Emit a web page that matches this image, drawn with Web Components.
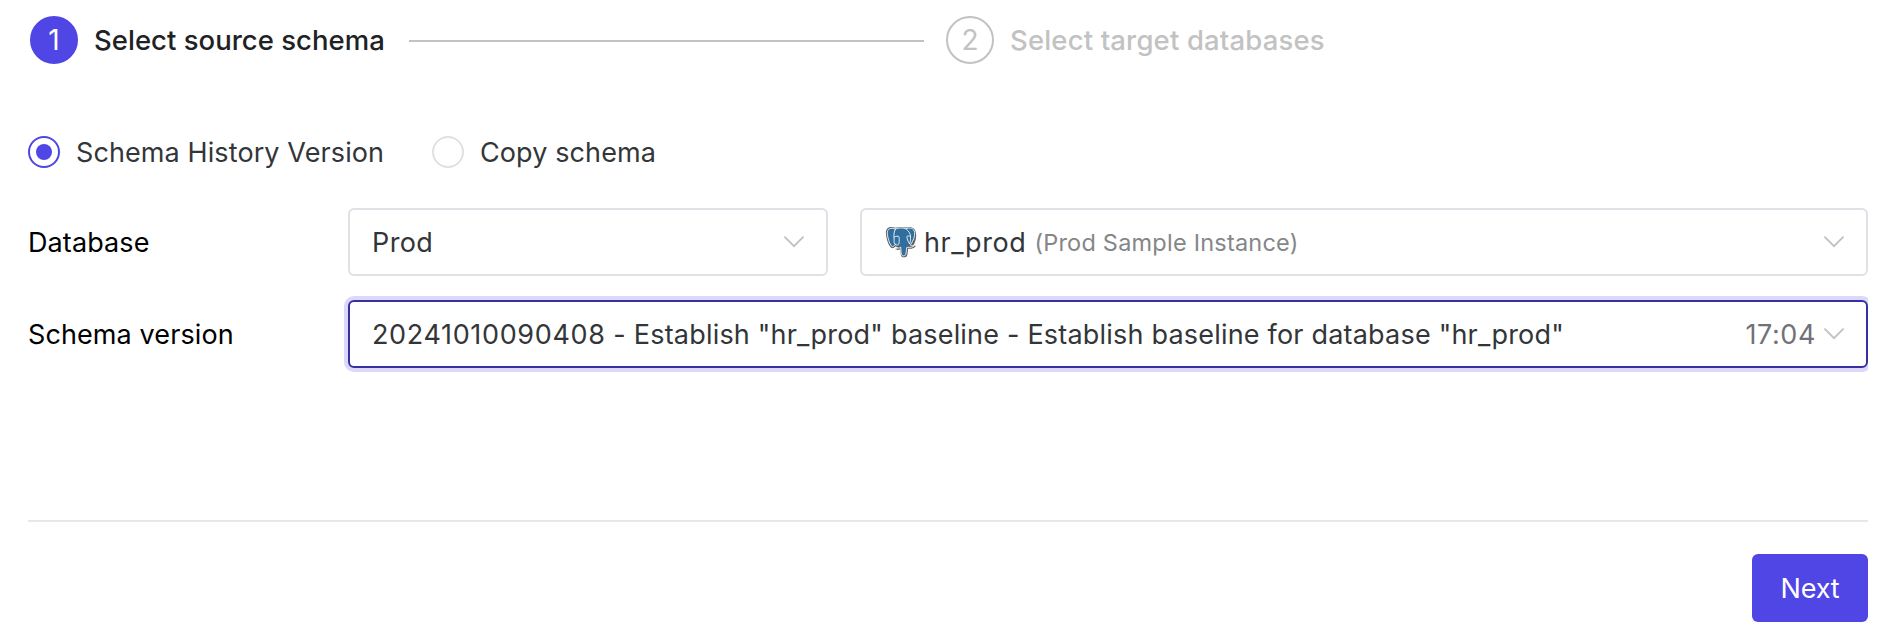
<!DOCTYPE html>
<html lang="en">
<head>
<meta charset="utf-8">
<title>Sync schema</title>
<style>
html, body { margin: 0; background: #fff; }
body { font: 400 27px/34px Inter, "Noto Sans", sans-serif; color: #333639; height: 638px; overflow: hidden; }
</style>
</head>
<body>
<sync-schema-page></sync-schema-page>
<script>
const define = (name, html, setup) => {
  const template = document.createElement('template');
  template.innerHTML = html;
  customElements.define(name, class extends HTMLElement {
    constructor() {
      super();
      this.attachShadow({ mode: 'open' }).append(template.content.cloneNode(true));
    }
    connectedCallback() { if (setup) setup(this, this.shadowRoot); }
  });
};

define('step-item', `
<style>
:host { display: flex; align-items: center; height: 48px; color: #c2c2c2; white-space: nowrap; font-size: 27.5px; font-weight: 500; letter-spacing: .16px; }
.dot { box-sizing: border-box; width: 48px; height: 48px; border: 2px solid #c2c2c2; border-radius: 50%; display: flex; align-items: center; justify-content: center; margin-right: 16px; font-weight: 400; font-size: 28px; letter-spacing: 0; }
:host([active]) { color: #1f2225; letter-spacing: .02px; }
:host([active]) .dot { color: #fff; background: #4f46e5; border-color: #4f46e5; }
</style>
<span class="dot"></span><slot></slot>`,
(el, root) => { root.querySelector('.dot').textContent = el.getAttribute('index'); });

define('step-line', `<style>:host { display: block; height: 2px; background: #c2c2c2; }</style>`);

define('radio-option', `
<style>
:host { display: flex; align-items: center; white-space: nowrap; letter-spacing: .1px; height: 32px; }
i { box-sizing: border-box; width: 32px; height: 32px; border: 2px solid #e0e0e6; border-radius: 50%; display: flex; align-items: center; justify-content: center; margin-right: 16px; }
span { padding-top: 2px; }
:host([checked]) i { border-color: #4f46e5; }
:host([checked]) i::before { content: ""; width: 16px; height: 16px; border-radius: 50%; background: #4f46e5; }
</style>
<i></i><span><slot></slot></span>`);

define('chevron-icon', `
<style>:host { display: block; width: 20px; height: 12px; } svg { display: block; }</style>
<svg width="20" height="12" viewBox="0 0 20 12" fill="none" stroke="#c2c2c2" stroke-width="1.9" stroke-linecap="round" stroke-linejoin="miter"><path d="M1 1.2 10 10.2 19 1.2"/></svg>`);

define('select-box', `
<style>
:host { box-sizing: border-box; display: flex; align-items: center; height: 68px; border: 2px solid #e0e0e6; border-radius: 6px; padding: 0 22px; white-space: nowrap; background: #fff; }
:host([focused]) { border-color: #3730a3; box-shadow: 0 0 0 4px #dcd8fa; }
.value { flex: 1; display: flex; align-items: center; padding-top: 2px; }
.suffix { padding-top: 2px; }
</style>
<span class="value"><slot></slot></span><span class="suffix"><slot name="suffix"></slot></span><chevron-icon></chevron-icon>`);

define('postgres-icon', `
<style>:host { display: block; width: 32px; height: 32px; } svg { display: block; }</style>
<svg width="32" height="32" viewBox="0 0 32 32" stroke-linejoin="round" stroke-linecap="round">
<path d="M10.400 1.800C5.200-.2.400 1.400.900 7.600c.3 4.600 2.300 11.200 4.700 13.700 1.800 1.900 3.400.9 4.900-1 .8.9 1.900 1.200 3.300 1.300-1.300.9-3 .7-3.300 1.300-.2.900 2.600 1.500 4.800.4.1 3 .2 5.300 1.100 7 1 1.600 4.400 1.500 5.500-.3.800-1.600.9-4.500 1.200-7.300 2.700.3 6.400-.5 7.400-2.300.5-1.200-1.300-.8-2.300-.8 2.100-3.200 3.500-7.900 2.800-12.200C30.500 1.500 25.500-.2 20.900 1.600c-3.700-.9-6.900-.9-10.500.2Z" fill="#5d6266"/>
<path d="M10.300 3C6 1.200 2 2.400 2.300 7.600c.3 4.200 2.200 10.200 4.200 12.500 1.200 1.200 2.300.3 3.700-1.500 1 .9 2.300 1.600 4.500 1.400.8-.1 1.400.4 1.400 1.200.1 3 .1 5.600.9 7.400.6 1.400 3.200 1.200 3.900-.2.800-1.800.8-5 1.200-7.500.3-1 1-1.400 1.800-1.400 1.600 0 1.100-1 1.800-2 2.600-3.400 4.500-8 3.900-11.900C28.900 1.800 24.600 1.200 20.900 2.700 17.200 1.800 13.800 2 10.300 3Z" fill="#2f6f9e"/>
<g fill="none" stroke="#fff" stroke-width=".85">
<path d="M10.300 3C6 1.200 2 2.400 2.300 7.600c.3 4.200 2.200 10.200 4.200 12.500 1.200 1.200 2.300.3 4.300-2.300"/>
<path d="M10.300 3.100C8.200 7.600 9 10.300 9.100 13c0 2.200-.4 3.600 1 5.300 1.200 1.400 3.700 1 4-1.200.1-2.600.3-4.500-.1-6.300-.5-1-3.300-.8-4.800.3"/>
<path d="M10.300 3.100C12.400 1.900 18.600 1.200 21.500 3.300c2.500 2 4.200 5 4 7.300-.2 3 .4 4-.9 6.900"/>
<path d="M21 2.700c4-1.600 8.100-.5 8.600 3.800.5 4-1.600 8.700-4 12-.7.900.3 1.400 3.900 1.100-1.400 1.500-4.500 2.100-6.700 1.700l-1.100.2c-.3 2.400-.4 5.400-1.100 7.300-.7 1.500-3.300 1.500-3.900 0-.8-2-.8-5-.9-7.700-1 1.200-3.200 1.300-4.600.9"/>
<path d="M25.500 10.400c-1-.7-3-.6-3.600.1.3 3.200 1.300 5.700 2.800 7.500"/>
</g>
</svg>`);

define('form-row', `
<style>
:host { display: grid; grid-template-columns: 320px 1fr; align-items: center; }
.label { color: #000; letter-spacing: .1px; padding-top: 2px; }
.fields { display: flex; gap: 32px; }
</style>
<span class="label"></span><div class="fields"><slot></slot></div>`,
(el, root) => { root.querySelector('.label').textContent = el.getAttribute('label'); });

define('primary-button', `
<style>
:host { display: block; }
button { display: block; width: 116px; height: 68px; border: 0; border-radius: 6px; background: #4f46e5; color: #fff; font: inherit; letter-spacing: -.2px; padding: 2px 0 0; }
</style>
<button type="button"><slot></slot></button>`);

define('sync-schema-page', `
<style>
:host { display: flow-root; padding-left: 28px; width: 1840px; overflow: hidden; height: 638px; }
.steps { display: flex; align-items: center; margin: 16px 0 0 2px; }
step-item { flex: none; }
step-item[active] { width: 379px; }
step-line { width: 515px; margin: 2px 22px 0 0; }
.radios { display: flex; margin-top: 72px; height: 32px; }
radio-option[checked] { width: 404px; }
.form { margin-top: 40px; display: flex; flex-direction: column; gap: 24px; }
.env { width: 480px; letter-spacing: .4px; }
.db { flex: 1; }
postgres-icon { margin: -2px 7px 0 1px; }
.name { letter-spacing: .58px; }
.instance { color: #858688; font-size: 23.5px; letter-spacing: .22px; margin-left: 8px; }
.version { flex: 1; letter-spacing: .2px; }
.version .id { letter-spacing: .65px; }
.version .text { white-space: pre; }
.time { color: #71717a; letter-spacing: .6px; margin-right: 8px; }
footer { margin-top: 152px; border-top: 2px solid #e5e7eb; padding-top: 32px; display: flex; justify-content: flex-end; }
</style>
<div class="steps">
  <step-item index="1" active>Select source schema</step-item>
  <step-line></step-line>
  <step-item index="2">Select target databases</step-item>
</div>
<div class="radios">
  <radio-option checked>Schema History Version</radio-option>
  <radio-option>Copy schema</radio-option>
</div>
<div class="form">
  <form-row label="Database">
    <select-box class="env">Prod</select-box>
    <select-box class="db"><postgres-icon></postgres-icon><span class="name">hr_prod</span><span class="instance">(Prod Sample Instance)</span></select-box>
  </form-row>
  <form-row label="Schema version">
    <select-box class="version" focused><span class="text"><span class="id">20241010090408</span> - Establish "hr_prod" baseline - Establish baseline for database "hr_prod"</span><span class="time" slot="suffix">17:04</span></select-box>
  </form-row>
</div>
<footer><primary-button>Next</primary-button></footer>`);
</script>
</body>
</html>
